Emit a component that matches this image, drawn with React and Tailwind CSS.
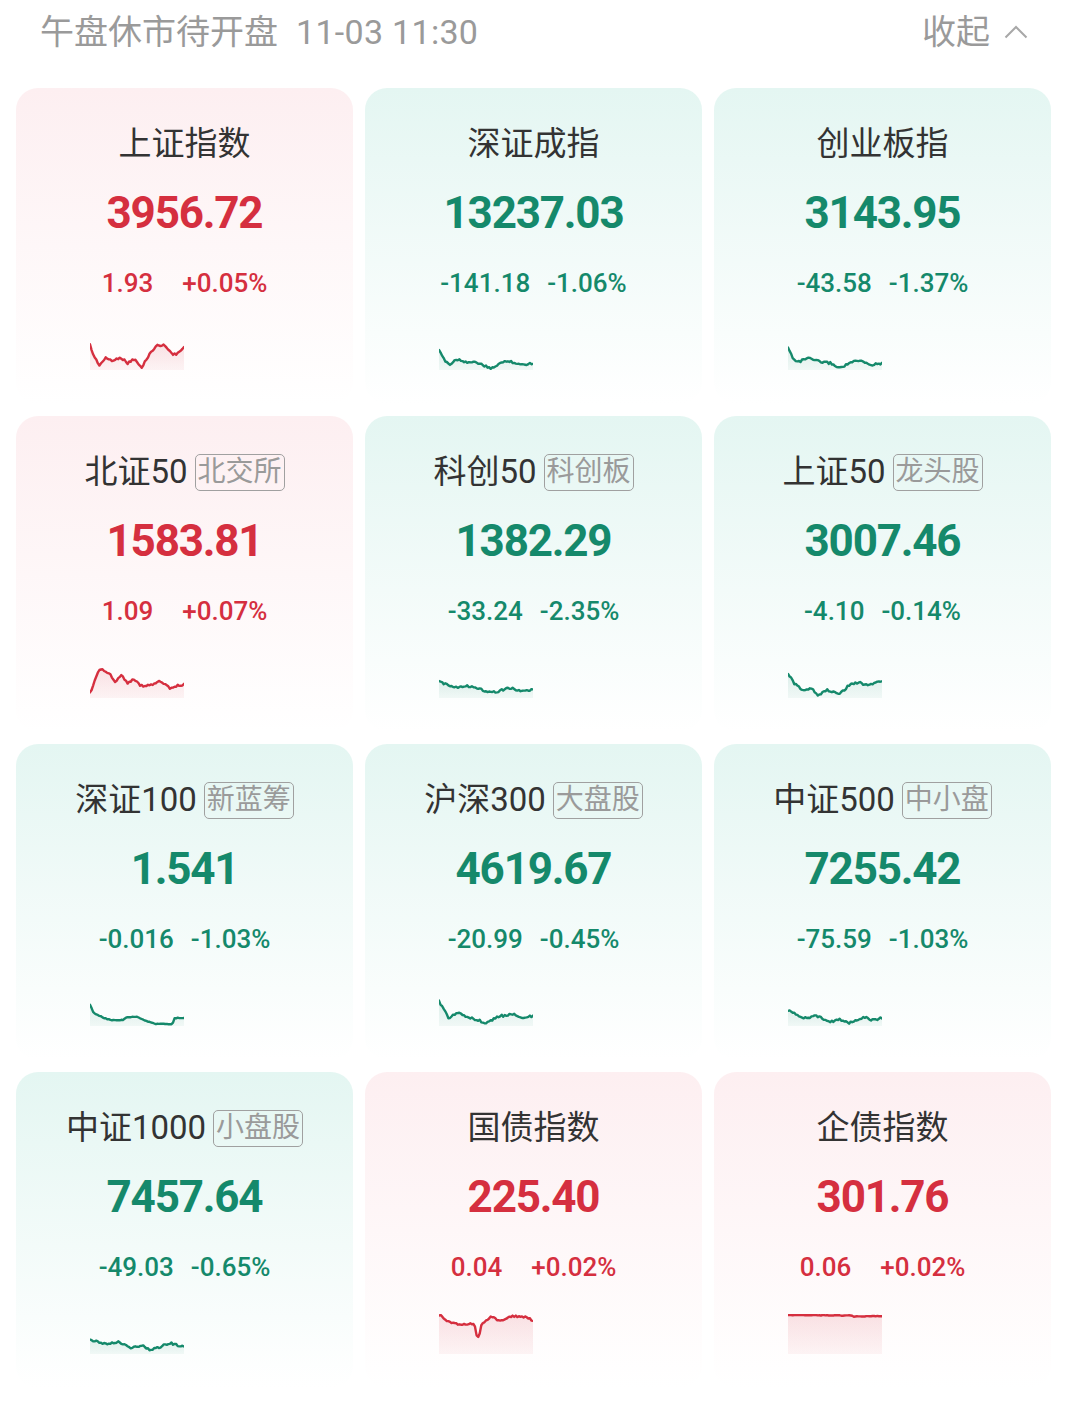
import React from "react";

const RED = "#d52f3f";
const GREEN = "#15896b";

// keypoints: [x fraction, y px inside a 94x40 box]
const cards = [
  { name: "上证指数", price: "3956.72", chg: "1.93", pct: "+0.05%", up: true,
    keys: [[0, 15], [0.04, 26], [0.1, 35], [0.17, 28], [0.25, 31], [0.32, 27], [0.4, 33], [0.47, 29], [0.55, 38], [0.62, 26], [0.7, 16], [0.77, 15], [0.82, 17], [0.88, 25], [0.94, 23], [1, 17]], seed: 1 },
  { name: "深证成指", price: "13237.03", chg: "-141.18", pct: "-1.06%", up: false,
    keys: [[0, 21], [0.06, 30], [0.12, 35], [0.18, 29], [0.3, 32], [0.42, 33], [0.55, 39], [0.65, 33], [0.75, 31], [0.88, 35], [1, 33]], seed: 2 },
  { name: "创业板指", price: "3143.95", chg: "-43.58", pct: "-1.37%", up: false,
    keys: [[0, 18], [0.06, 29], [0.12, 32], [0.2, 28], [0.35, 32], [0.45, 33], [0.55, 38], [0.68, 32], [0.78, 31], [0.88, 35], [1, 33]], seed: 3 },
  { name: "北证50", tag: "北交所", price: "1583.81", chg: "1.09", pct: "+0.07%", up: true,
    keys: [[0, 35], [0.04, 26], [0.1, 11], [0.2, 15], [0.27, 25], [0.33, 16], [0.4, 25], [0.46, 21], [0.55, 28], [0.65, 27], [0.75, 23], [0.86, 31], [0.93, 28], [1, 26]], seed: 4 },
  { name: "科创50", tag: "科创板", price: "1382.29", chg: "-33.24", pct: "-2.35%", up: false,
    keys: [[0, 24], [0.1, 27], [0.2, 29], [0.35, 28], [0.5, 33], [0.6, 34], [0.75, 30], [0.88, 33], [1, 32]], seed: 5 },
  { name: "上证50", tag: "龙头股", price: "3007.46", chg: "-4.10", pct: "-0.14%", up: false,
    keys: [[0, 15], [0.06, 25], [0.15, 32], [0.25, 30], [0.32, 37], [0.42, 32], [0.55, 36], [0.65, 27], [0.75, 24], [0.83, 27], [1, 23]], seed: 6 },
  { name: "深证100", tag: "新蓝筹", price: "1.541", chg: "-0.016", pct: "-1.03%", up: false,
    keys: [[0, 19], [0.04, 27], [0.15, 32], [0.22, 34], [0.35, 34], [0.4, 31], [0.5, 31], [0.6, 35], [0.7, 38], [0.88, 38], [0.9, 32], [1, 32]], seed: 7, flat: true },
  { name: "沪深300", tag: "大盘股", price: "4619.67", chg: "-20.99", pct: "-0.45%", up: false,
    keys: [[0, 15], [0.1, 32], [0.2, 27], [0.35, 32], [0.5, 37], [0.65, 30], [0.8, 28], [0.9, 32], [1, 30]], seed: 8 },
  { name: "中证500", tag: "中小盘", price: "7255.42", chg: "-75.59", pct: "-1.03%", up: false,
    keys: [[0, 24], [0.15, 32], [0.3, 30], [0.45, 36], [0.55, 33], [0.65, 37], [0.8, 31], [0.9, 34], [1, 32]], seed: 9 },
  { name: "中证1000", tag: "小盘股", price: "7457.64", chg: "-49.03", pct: "-0.65%", up: false,
    keys: [[0, 25], [0.15, 30], [0.3, 28], [0.45, 34], [0.55, 31], [0.65, 36], [0.85, 29], [1, 33]], seed: 10 },
  { name: "国债指数", price: "225.40", chg: "0.04", pct: "+0.02%", up: true,
    keys: [[0, 1], [0.1, 7], [0.2, 10], [0.35, 10], [0.38, 12], [0.4, 22], [0.43, 22], [0.45, 11], [0.55, 2], [0.65, 7], [0.75, 2], [0.9, 3], [1, 6]], seed: 11 },
  { name: "企债指数", price: "301.76", chg: "0.06", pct: "+0.02%", up: true,
    keys: [[0, 1], [0.68, 1.5], [0.7, 2.5], [1, 2]], seed: 12, flat: true },
];

const interp = (keys, t) => {
  for (let i = 0; i < keys.length - 1; i++) {
    const [x0, y0] = keys[i];
    const [x1, y1] = keys[i + 1];
    if (t >= x0 && t <= x1) return y0 + ((y1 - y0) * (t - x0)) / (x1 - x0 || 1);
  }
  return keys[keys.length - 1][1];
};

const noise = (i, seed) => {
  const v = Math.sin(i * 12.9898 + seed * 78.233) * 43758.5453;
  return v - Math.floor(v) - 0.5;
};

function Spark({ keys, color, seed, flat }) {
  const W = 94;
  const H = 40;
  const N = 60;
  const pts = [];
  for (let i = 0; i <= N; i++) {
    const t = i / N;
    let y = interp(keys, t) + noise(i, seed) * (flat ? 0.6 : 2.2);
    y = Math.max(1, Math.min(H - 1, y));
    pts.push([t * W, y]);
  }
  const line = pts.map(([x, y]) => `${x.toFixed(1)},${y.toFixed(1)}`).join(" ");
  const area = `M0,${H} L${line.split(" ").join(" L")} L${W},${H} Z`;
  return (
    <svg width={W} height={H} viewBox={`0 0 ${W} ${H}`}>
      <defs>
        <linearGradient id={`fill${seed}`} x1="0" y1="0" x2="0" y2="1">
          <stop offset="0%" stopColor={color} stopOpacity="0.13" />
          <stop offset="100%" stopColor={color} stopOpacity="0.05" />
        </linearGradient>
      </defs>
      <path d={area} fill={`url(#fill${seed})`} />
      <polyline points={line} fill="none" stroke={color} strokeWidth="2.4" strokeLinejoin="round" strokeLinecap="round" />
    </svg>
  );
}

function Card({ c }) {
  const color = c.up ? RED : GREEN;
  return (
    <div
      className={`h-[316px] rounded-[22px] flex flex-col items-center pt-9 bg-gradient-to-b ${
        c.up ? "from-[#fdeff1]" : "from-[#e4f6f2]"
      } to-white`}
    >
      <div className="h-10 flex items-center gap-[7px] text-[33px] text-[#333]">
        <span>{c.name}</span>
        {c.tag && (
          <span className="h-[37px] px-[2px] flex items-center border-[1.5px] border-[#a0a0a0] rounded-[5px] text-[28px] text-[#9a9a9a] leading-none">
            {c.tag}
          </span>
        )}
      </div>
      <div
        className="mt-[23px] h-[52px] leading-[52px] text-[44px] font-bold tracking-[-1.2px]"
        style={{ color }}
      >
        {c.price}
      </div>
      <div
        className={`mt-[28px] h-8 leading-8 flex text-[26px] font-medium ${c.up ? "gap-[29px]" : "gap-[17px]"}`}
        style={{ color }}
      >
        <span>{c.chg}</span>
        <span>{c.pct}</span>
      </div>
      <div className="self-start ml-[74px] mt-[31px]">
        <Spark keys={c.keys} color={color} seed={c.seed} flat={c.flat} />
      </div>
    </div>
  );
}

export default function App() {
  return (
    <div
      className="w-[1072px] h-[1401px] bg-white"
      style={{ fontFamily: "Roboto, 'Noto Sans CJK SC', sans-serif" }}
    >
      <div className="h-16 flex items-center justify-between pl-10 pr-[44px] text-[34px] text-[#9a9a9a]">
        <span className="flex items-center">
          <span>午盘休市待开盘</span>
          <span className="ml-[18px] tracking-[0.3px]">11-03 11:30</span>
        </span>
        <span className="flex items-center gap-[14px]">
          收起
          <svg width="24" height="14" viewBox="0 0 24 14">
            <polyline points="1.5,12.5 12,2 22.5,12.5" fill="none" stroke="#a8a8a8" strokeWidth="2" />
          </svg>
        </span>
      </div>
      <div className="mt-6 ml-4 grid grid-cols-[337px_337px_337px] gap-3">
        {cards.map((c) => (
          <Card key={c.name} c={c} />
        ))}
      </div>
    </div>
  );
}
